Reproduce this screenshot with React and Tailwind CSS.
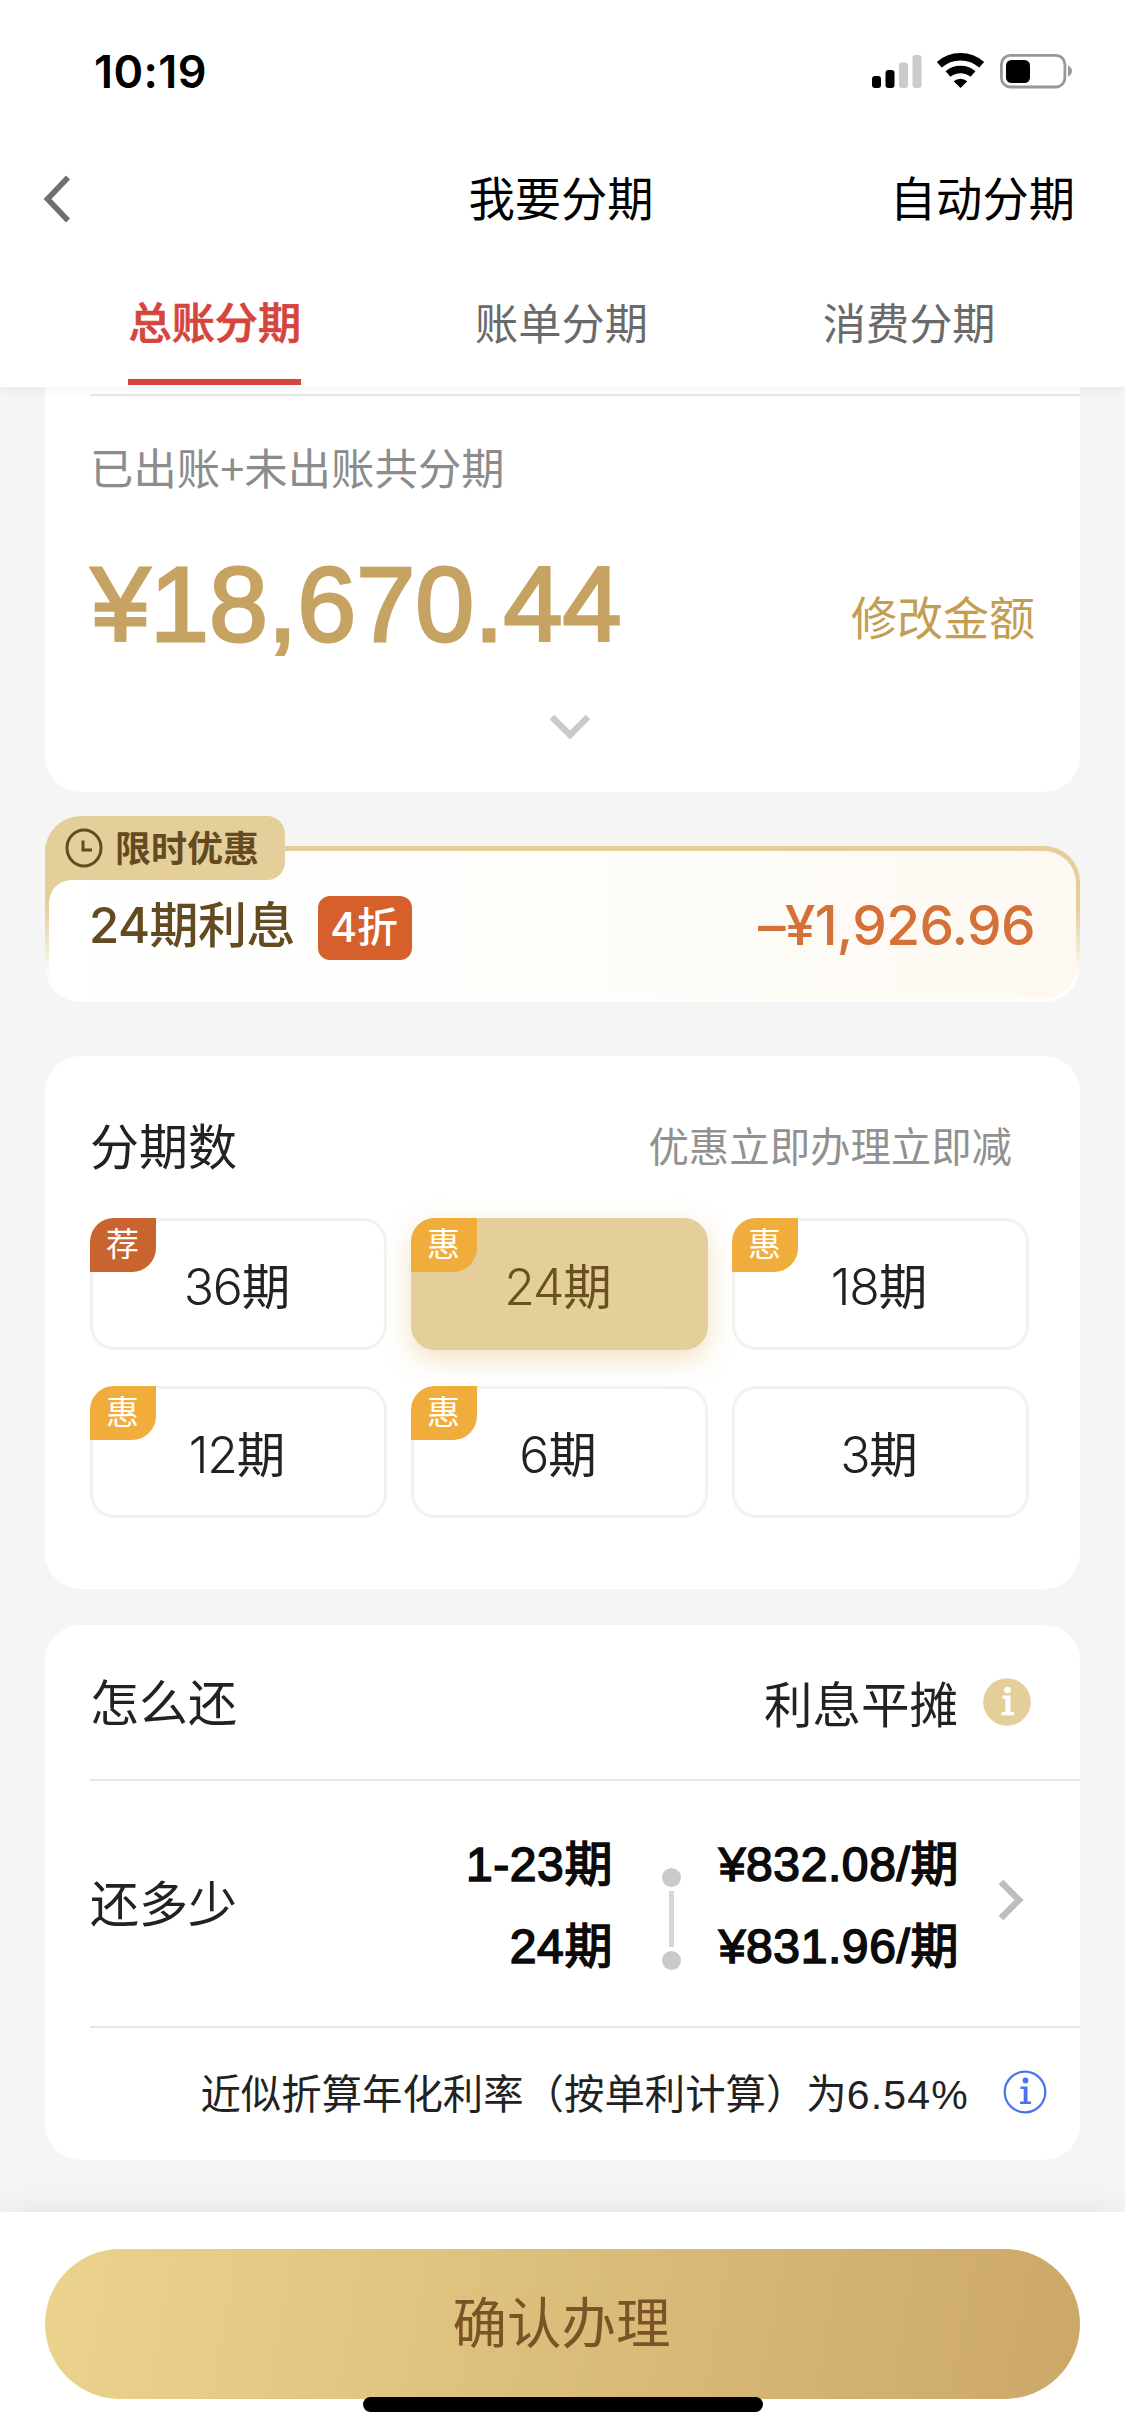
import React from "react";

const TERMS = [
  { count: "36", tag: "荐", tagColor: "bg-[#c9632f]" },
  { count: "24", tag: "惠", tagColor: "bg-[#f1ad3c]", selected: true },
  { count: "18", tag: "惠", tagColor: "bg-[#f1ad3c]" },
  { count: "12", tag: "惠", tagColor: "bg-[#f1ad3c]" },
  { count: "6", tag: "惠", tagColor: "bg-[#f1ad3c]" },
  { count: "3" },
];

function StatusBar() {
  return (
    <div className="flex h-[142px] items-center justify-between pl-[94px] pr-[53px]">
      <span className="font-['Inter',sans-serif] text-[45px] font-semibold leading-none tracking-[0.4px] text-black">10:19</span>
      <svg width="200" height="36" viewBox="0 0 200 36" className="block">
        <rect x="0" y="23" width="9" height="12" rx="3" fill="#000" />
        <rect x="13.5" y="17" width="9" height="18" rx="3" fill="#000" />
        <rect x="27" y="9.5" width="9" height="25.5" rx="3" fill="#cbcbcb" />
        <rect x="40.5" y="2" width="9" height="33" rx="3" fill="#cbcbcb" />
        <g fill="none" stroke="#000" strokeWidth="7.4">
          <path d="M67.3 11.8a32 32 0 0 1 42.4 0" />
          <path d="M76 21a19.5 19.5 0 0 1 25 0" />
        </g>
        <path d="M88.500 35l-6.800-6.800a10.500 10.500 0 0 1 13.600 0z" fill="#000" />
        <rect x="129.400" y="2.400" width="63.500" height="31.600" rx="9" fill="none" stroke="#989898" strokeWidth="2.800" />
        <rect x="134" y="7" width="24" height="23" rx="5.500" fill="#000" />
        <path d="M196 12.500c2.500 1 4 3 4 5.500s-1.500 4.500-4 5.500z" fill="#989898" />
      </svg>
    </div>
  );
}

function Header() {
  return (
    <header className="relative z-10 h-[387px] bg-white shadow-[0_2px_12px_rgba(0,0,0,0.06)]">
      <StatusBar />
      <div className="grid h-[114px] grid-cols-3 items-center pl-[43px] pr-[46px] text-[46.300px] leading-none text-black">
        <svg width="30" height="48" viewBox="0 0 30 48" fill="none" stroke="#6f6f6f" strokeWidth="5.600">
          <path d="M25 2.500L4.500 24 25 45.500" />
        </svg>
        <span className="pb-[6px] text-center">我要分期</span>
        <span className="pb-[6px] pr-[4px] text-right">自动分期</span>
      </div>
      <nav className="grid h-[129px] grid-cols-3 px-[41px] text-[43.200px] leading-none text-[#6a6a6a]">
        <div className="flex justify-center">
          <span className="border-b-[6px] border-[#d5453d] pt-[43px] font-medium text-[#d5453d] [-webkit-text-stroke:0.7px_#d5453d]">总账分期</span>
        </div>
        <span className="pr-[2px] pt-[44px] text-center">账单分期</span>
        <span className="pr-[2px] pt-[44px] text-center">消费分期</span>
      </nav>
    </header>
  );
}

function AmountCard() {
  return (
    <section className="h-[405px] rounded-b-[36px] bg-white pl-[45px] pt-[7px]">
      <div className="h-[2px] bg-[#e8e8e8]" />
      <p className="mt-[49px] text-[43.300px] leading-none tracking-[0.1px] text-[#8c8c8c]">已出账+未出账共分期</p>
      <div className="mt-[64px] flex h-[104px] justify-between pr-[45px]">
        <span className="pl-[1px] font-['Liberation_Sans',sans-serif] text-[106px] leading-[104px] text-[#c6a363] [-webkit-text-stroke:2.8px_#c6a363]">¥18,670.44</span>
        <span className="mt-[40px] text-[46px] leading-none text-[#c39e52]">修改金额</span>
      </div>
      <svg width="42" height="28" viewBox="0 0 42 28" fill="none" stroke="#c9cacc" strokeWidth="6.500" className="ml-[459px] mt-[58px]">
        <path d="M3 3L21 21 39 3" />
      </svg>
    </section>
  );
}

function PromoCard() {
  return (
    <section className="relative mt-[24px] pt-[30px]">
      <div className="h-[156px] rounded-b-[36px] rounded-tr-[36px] bg-[linear-gradient(to_bottom,#e4cf9a_0%,#e4cf9a_40%,#fffefb_85%,#ffffff_100%)] px-[4px] pb-[3px] pt-[5px]">
        <div className="flex h-full items-center justify-between rounded-b-[32px] rounded-tr-[32px] bg-[linear-gradient(to_right,#ffffff,#fefdfa_50%,#fdf9f2)] pl-[40px] pr-[41px]">
          <div className="flex items-center">
            <span className="font-['Inter','Noto_Sans_CJK_SC',sans-serif] text-[49px] font-medium leading-none tracking-[-0.500px] text-[#644a20]">24期利息</span>
            <span className="ml-[23px] mt-[5px] flex h-[64px] w-[94px] items-center justify-center rounded-[12px] bg-[#d5602b] pr-[2px] font-['Inter','Noto_Sans_CJK_SC',sans-serif] text-[41px] font-medium leading-none text-white">4折</span>
          </div>
          <span className="font-['Inter',sans-serif] text-[55px] font-[550] leading-none tracking-[-0.700px] text-[#d57039]">–¥1,926.96</span>
        </div>
      </div>
      <div className="absolute left-[4px] top-[64px] h-[22px] w-[22px] bg-[radial-gradient(circle_at_bottom_right,transparent_21.500px,#e4cf9a_22px)]" />
      <div className="absolute left-0 top-0 flex h-[64px] w-[240px] items-center rounded-br-[18px] rounded-tl-[36px] rounded-tr-[18px] bg-[#e4cf9a] pl-[20px]">
        <svg width="38" height="40" viewBox="0 0 38 40" fill="none" stroke="#644a20" strokeWidth="3">
          <ellipse cx="19" cy="20" rx="17" ry="18" />
          <path d="M18 12.500v9.500h9" />
        </svg>
        <span className="ml-[12px] pb-[5px] text-[36px] font-bold leading-none text-[#644a20]">限时优惠</span>
      </div>
    </section>
  );
}

function TermButton({ count, tag, tagColor, selected }) {
  return (
    <button
      className={
        selected
          ? "relative flex h-[132px] items-center justify-center rounded-[24px] bg-[#e4cf9a] text-[#69501f] shadow-[0_9px_27px_rgba(225,180,100,0.4)]"
          : "relative flex h-[132px] items-center justify-center rounded-[24px] bg-white text-[#222] shadow-[inset_0_0_0_3px_#f2f2f2]"
      }
    >
      <span className="flex items-baseline pr-[3px] pt-[4px] text-[48.500px] leading-none">
        <span className="font-['Inter',sans-serif] text-[50px] font-[350] tracking-[-1.200px]">{count}</span>期
      </span>
      {tag && (
        <span className={"absolute left-0 top-0 flex h-[54px] w-[66px] items-center justify-center rounded-br-[24px] rounded-tl-[24px] pb-[6px] pr-[1px] text-[33px] leading-none text-white " + tagColor}>
          {tag}
        </span>
      )}
    </button>
  );
}

function TermsCard() {
  return (
    <section className="mt-[54px] h-[533px] rounded-[36px] bg-white pl-[45px] pr-[51px]">
      <div className="flex h-[162px] items-center justify-between pr-[17px] pt-[16px] leading-none">
        <h2 className="pb-[3px] text-[49px] text-[#222]">分期数</h2>
        <span className="text-[40.400px] text-[#919191]">优惠立即办理立即减</span>
      </div>
      <div className="grid grid-cols-3 gap-x-[24px] gap-y-[36px]">
        {TERMS.map((t) => (
          <TermButton key={t.count} {...t} />
        ))}
      </div>
    </section>
  );
}

function RepayCard() {
  return (
    <section className="mt-[36px] h-[535px] rounded-[36px] bg-white pl-[45px] leading-none text-[#222]">
      <div className="flex h-[156px] items-center border-b-2 border-[#e6e6e6] pr-[49px]">
        <h2 className="pb-[6px] text-[49px]">怎么还</h2>
        <span className="ml-auto text-[48.500px]">利息平摊</span>
        <svg width="48" height="48" viewBox="0 0 48 48" className="ml-[25px]">
          <circle cx="24" cy="24" r="23.800" fill="#e4cf9a" />
          <g fill="#fff">
            <circle cx="24.500" cy="12" r="3.300" />
            <path d="M19.500 17.500h8V34H31v3.200H18.500V34h3.800V20.700h-2.800z" />
          </g>
        </svg>
      </div>
      <div className="flex h-[247px] items-center border-b-2 border-[#e6e6e6] font-['Liberation_Sans','Noto_Sans_CJK_SC',sans-serif]">
        <h2 className="w-[180px] pt-[3px] text-[49px]">还多少</h2>
        <div className="flex w-[343px] flex-col items-end gap-[34px] pt-[4px] text-[48px] tracking-[0.6px] text-[#0b0b0b] [-webkit-text-stroke:1.600px_#0b0b0b]">
          <span>1-23期</span>
          <span>24期</span>
        </div>
        <div className="ml-[48px] mt-[30px] flex w-[20px] flex-col items-center gap-[4px]">
          <i className="h-[19px] w-[19px] rounded-full bg-[#cacaca]" />
          <i className="h-[56px] w-[5px] bg-[#d6d6d6]" />
          <i className="h-[19px] w-[19px] rounded-full bg-[#cacaca]" />
        </div>
        <div className="ml-[20px] flex w-[258px] flex-col items-end gap-[34px] pt-[4px] text-[48px] tracking-[0.6px] text-[#0b0b0b] [-webkit-text-stroke:1.600px_#0b0b0b]">
          <span>¥832.08/期</span>
          <span>¥831.96/期</span>
        </div>
        <svg width="28" height="42" viewBox="0 0 28 42" fill="none" stroke="#bdbdbd" strokeWidth="6.500" className="mb-[7px] ml-[38px]">
          <path d="M4 3l18 18L4 39" />
        </svg>
      </div>
      <div className="flex h-[132px] items-center justify-end pr-[33px] font-['Liberation_Sans','Noto_Sans_CJK_SC',sans-serif]">
        <span className="pt-[3px] text-[40.400px]">
          近似折算年化利率（按单利计算）为<span className="text-[41px] tracking-[1.200px]">6.54%</span>
        </span>
        <svg width="44" height="44" viewBox="0 0 44 44" className="mb-[4px] ml-[34px]">
          <circle cx="22" cy="22" r="20.300" fill="none" stroke="#4a74ee" strokeWidth="2.200" />
          <g fill="#4a74ee">
            <circle cx="22.500" cy="10.500" r="2.900" />
            <path d="M17.500 16.500h7v15H28v2.500H17v-2.500h3.700V19h-3.200z" />
          </g>
        </svg>
      </div>
    </section>
  );
}

export default function App() {
  return (
    <div className="h-[2435px] w-[1125px] overflow-hidden bg-[#f5f5f5] font-['Noto_Sans_CJK_SC',sans-serif]">
      <Header />
      <main className="h-[1825px] px-[45px]">
        <AmountCard />
        <PromoCard />
        <TermsCard />
        <RepayCard />
      </main>
      <footer className="relative h-[223px] bg-white px-[45px] pt-[37px] shadow-[0_-6px_30px_rgba(0,0,0,0.06)]">
        <button className="flex h-[150px] w-full items-center justify-center rounded-full bg-[linear-gradient(100deg,#ebd38d,#cca868)] pb-[7px] pr-[2px] text-[54.500px] leading-none text-[#7c5227]">
          确认办理
        </button>
        <div className="absolute left-[363px] top-[185px] h-[15px] w-[400px] rounded-full bg-black" />
      </footer>
    </div>
  );
}
